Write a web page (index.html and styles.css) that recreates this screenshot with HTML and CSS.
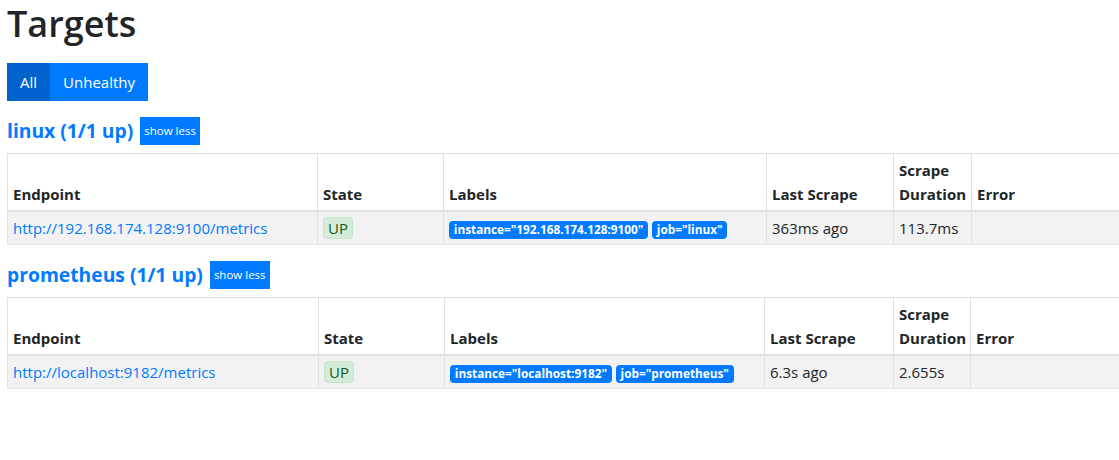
FILE: index.html
```html
<!DOCTYPE html>
<html lang="en">
<head>
<meta charset="utf-8">
<title>Targets</title>
<link rel="stylesheet" href="styles.css">
</head>
<body>
<main class="page">
  <h1 class="title">Targets</h1>
  <div class="btn-group">
    <button class="btn btn-active">All</button>
    <button class="btn">Unhealthy</button>
  </div>

  <section class="pool">
    <h2 class="pool-head"><a href="#job-linux">linux (1/1 up)</a><button class="btn-xs">show less</button></h2>
    <table class="targets">
      <colgroup>
        <col style="width:310px"><col style="width:126px"><col style="width:323px"><col style="width:127px"><col style="width:78px"><col>
      </colgroup>
      <thead>
        <tr><th>Endpoint</th><th>State</th><th>Labels</th><th>Last Scrape</th><th>Scrape Duration</th><th>Error</th></tr>
      </thead>
      <tbody>
        <tr>
          <td><a href="#">http://192.168.174.128:9100/metrics</a></td>
          <td><span class="state">UP</span></td>
          <td><span class="badge">instance="192.168.174.128:9100"</span> <span class="badge">job="linux"</span></td>
          <td>363ms ago</td>
          <td>113.7ms</td>
          <td></td>
        </tr>
      </tbody>
    </table>
  </section>

  <section class="pool">
    <h2 class="pool-head"><a href="#job-prometheus">prometheus (1/1 up)</a><button class="btn-xs">show less</button></h2>
    <table class="targets">
      <colgroup>
        <col style="width:311px"><col style="width:126px"><col style="width:320px"><col style="width:129px"><col style="width:77px"><col>
      </colgroup>
      <thead>
        <tr><th>Endpoint</th><th>State</th><th>Labels</th><th>Last Scrape</th><th>Scrape Duration</th><th>Error</th></tr>
      </thead>
      <tbody>
        <tr>
          <td><a href="#">http://localhost:9182/metrics</a></td>
          <td><span class="state">UP</span></td>
          <td><span class="badge">instance="localhost:9182"</span> <span class="badge">job="prometheus"</span></td>
          <td>6.3s ago</td>
          <td>2.655s</td>
          <td></td>
        </tr>
      </tbody>
    </table>
  </section>
</main>
</body>
</html>
```

FILE: styles.css
```css
html, body {
  margin: 0;
  overflow: hidden;
  background: #fff;
}
body {
  font-family: "Open Sans", "Noto Sans", sans-serif;
  font-size: 16px;
  line-height: 1.5;
  color: #212529;
}
.page {
  padding: 0 0 0 7px;
}
a {
  color: #007bff;
  text-decoration: none;
}
.title {
  font-size: 36px;
  font-weight: 600;
  line-height: 48px;
  margin: 0 0 15px;
}
.btn-group {
  display: flex;
  margin-bottom: 16px;
}
.btn {
  font-family: inherit;
  font-size: 15px;
  line-height: 24px;
  padding: 7px 13px;
  border: 0;
  background: #007bff;
  color: #fff;
  border-radius: 0;
}
.btn-active {
  background: #0062cc;
}
.pool-head {
  display: flex;
  align-items: center;
  gap: 7px;
  margin: 0 0 8px;
  height: 28px;
  font-size: 19.3px;
  font-weight: 700;
  line-height: 24px;
}
.btn-xs {
  font-family: inherit;
  font-size: 11.5px;
  font-weight: 400;
  line-height: 18px;
  padding: 5px 4px;
  border: 0;
  background: #007bff;
  color: #fff;
  border-radius: 0;
}
.targets {
  width: 1116px;
  border-collapse: collapse;
  table-layout: fixed;
  margin-bottom: 16px;
  border: 1px solid #dee2e6;
}
.targets th,
.targets td {
  border: 1px solid #dee2e6;
  padding: 4px 5px;
  text-align: left;
  font-size: 15px;
  line-height: 24px;
}
.targets th {
  font-weight: 700;
  vertical-align: bottom;
  border-bottom: 2px solid #dee2e6;
}
.targets td {
  vertical-align: top;
}
.targets tbody tr {
  background: #f2f2f2;
}
.state {
  display: inline;
  padding: 0 4px;
  background: #d4edda;
  color: #155724;
  border: 1px solid #c3e6cb;
  border-radius: 4px;
}
.badge {
  display: inline-block;
  padding: 3px 4.8px;
  font-size: 11.8px;
  font-weight: 700;
  line-height: 1;
  color: #fff;
  background: #007bff;
  border-radius: 4px;
  white-space: nowrap;
  vertical-align: baseline;
}
```
